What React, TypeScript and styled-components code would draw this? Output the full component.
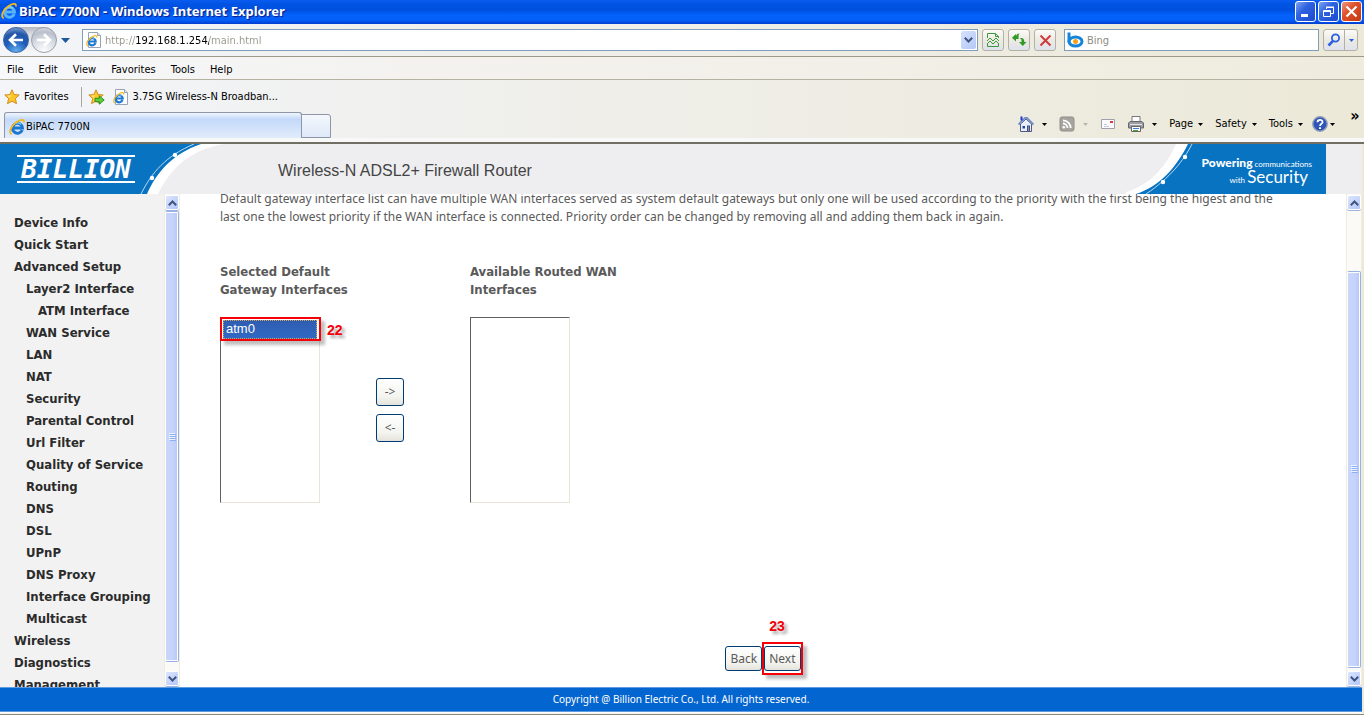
import React from "react";
import styled, { createGlobalStyle } from "styled-components";

const uiFont = `Tahoma, "DejaVu Sans Condensed", sans-serif`;
const arial = `Arial, "Liberation Sans", sans-serif`;

const GlobalStyle = createGlobalStyle`
  *, *::before, *::after { box-sizing: border-box; }
  body { margin: 0; background: #ece9d8; font: 11px/14px ${uiFont}; color: #000; }
  button, input, select { font: inherit; color: inherit; margin: 0; }
  button { padding: 0; border: 0; background: none; }
  input { outline: 0; }
  a { color: inherit; text-decoration: none; }
  svg { display: block; flex: none; }
`;

const Window = styled.div`
  display: flex;
  flex-direction: column;
  height: 100vh;
  min-height: 480px;
  overflow: hidden;
`;

/* ---------- title bar ---------- */
const TitleBar = styled.header`
  display: flex;
  align-items: center;
  gap: 2px;
  flex: none;
  height: 24px;
  padding: 0 2px 2px 1px;
  background: linear-gradient(#0a5cf0 0, #0054e3 4px, #0050e0 10px, #0362fb 15px, #0560fa 20px, #003dd0 24px);
`;
const Title = styled.h1`
  flex: 1;
  margin: 0;
  font: bold 13px/20px "Trebuchet MS", "Noto Sans", sans-serif;
  color: #fff;
  text-shadow: 1px 1px 1px #0a1883;
`;
const CaptionButton = styled.button<{ $close?: boolean }>`
  display: grid;
  place-items: center;
  width: 21px;
  height: 21px;
  border: 1px solid #fff;
  border-radius: 3px;
  background: ${(p) =>
    p.$close
      ? "linear-gradient(135deg, #ec9a80, #e0502a 40%, #c23a12)"
      : "linear-gradient(135deg, #7fa4f2, #2f62e0 40%, #1b4bd0)"};
`;

/* ---------- toolbars ---------- */
const barFill = "linear-gradient(90deg, #f3f5f9, #f0f0ee 30%, #ece9d8)";

const AddressBar = styled.div`
  display: flex;
  align-items: center;
  gap: 4px;
  flex: none;
  height: 33px;
  padding: 0 6px 0 3px;
  background: ${barFill};
  border-bottom: 1px solid #9d9a8a;
`;
const NavButtons = styled.div`
  display: flex;
  align-items: center;
  gap: 2px;
  height: 27px;
  border-radius: 14px;
  background: linear-gradient(#b4b8bf, #dfe2e6 30%, #f6f7f9);
`;
const RoundButton = styled.button<{ $active?: boolean }>`
  display: grid;
  place-items: center;
  width: 26px;
  height: 26px;
  border-radius: 50%;
  border: 1px solid ${(p) => (p.$active ? "#3c62a4" : "#9ba1ab")};
  background: ${(p) =>
    p.$active
      ? "radial-gradient(circle at 50% 100%, #69b4f2, #1c5cb8 45%, #2458a8 70%, #9fbbe2)"
      : "radial-gradient(circle at 50% 100%, #ffffff, #d6dbe3 50%, #b9c0cc 75%, #e8ebf0)"};
`;
const BareButton = styled.button`
  display: grid;
  place-items: center;
  width: 12px;
  height: 20px;
  margin: 0 7px 0 -2px;
`;
const Field = styled.div`
  display: flex;
  align-items: center;
  gap: 3px;
  height: 22px;
  padding: 0 1px 0 3px;
  border: 1px solid #7f9db9;
  background: #fff;
`;
const AddressField = styled(Field)`
  flex: 1;
`;
const SearchField = styled(Field)`
  width: 255px;
  margin-left: 4px;
  padding-left: 2px;
`;
const TextInput = styled.input`
  flex: 1;
  min-width: 0;
  height: 18px;
  padding: 0;
  border: 0;
  background: transparent;
  color: #8d8b80;
  &::placeholder { color: #8d8b80; }
`;
const UrlInput = styled(TextInput)`
  color: transparent;
  background: linear-gradient(90deg, #98968a 31px, #000 31px, #000 104px, #98968a 104px);
  background-clip: text;
`;
const DropButton = styled.button`
  display: grid;
  place-items: center;
  width: 15px;
  height: 18px;
  border-radius: 2px;
  background: linear-gradient(135deg, #d5e1fc, #b4c8f6);
`;
const ToolButton = styled.button`
  display: grid;
  place-items: center;
  width: 22px;
  height: 22px;
  border: 1px solid #b3b1a6;
  border-radius: 3px;
  background: linear-gradient(#fbfbf9, #eceae2 50%, #dfe2ee);
`;
const SplitButton = styled.div`
  display: flex;
  width: 35px;
  height: 22px;
  border: 1px solid #b3b1a6;
  border-radius: 3px;
  background: linear-gradient(#fbfbf9, #eceae2 50%, #dfe2ee);
  button { display: grid; place-items: center; flex: 1; }
  button + button { flex: 0 0 13px; border-left: 1px solid #b3b1a6; }
`;

const MenuBar = styled.nav`
  display: flex;
  align-items: center;
  gap: 15px;
  flex: none;
  height: 23px;
  padding: 4px 7px 0;
  background: linear-gradient(90deg, #f7f8fb, #f3f2ef 30%, #efecde);
  border-bottom: 1px solid #b5b2a2;
`;
const FavoritesBar = styled.div`
  display: flex;
  align-items: center;
  gap: 8px;
  flex: none;
  height: 32px;
  padding: 2px 4px 0;
  background: ${barFill};
`;
const FavButton = styled.button`
  display: flex;
  align-items: center;
  gap: 4px;
  height: 20px;
`;
const FavDivider = styled.span`
  width: 1px;
  height: 20px;
  margin: 0 -2px 0 4px;
  background: #aaa89a;
`;

const TabRow = styled.div`
  display: flex;
  align-items: flex-end;
  flex: none;
  height: 32px;
  padding: 0 0 4px 4px;
  background: linear-gradient(#f8f8f8, #f8f8f8) bottom / 100% 4px no-repeat, ${barFill};
  border-bottom: 2px solid #716f64;
`;
const Tab = styled.button`
  display: flex;
  align-items: center;
  gap: 1px;
  align-self: stretch;
  width: 298px;
  padding: 2px 4px 0;
  border: 1px solid #8d97a8;
  border-bottom: 0;
  border-radius: 3px 3px 0 0;
  background: linear-gradient(#f0f5fd, #c3d9f9 25%, #e2ecfb);
`;
const NewTab = styled.button`
  width: 30px;
  height: 24px;
  margin-left: -1px;
  border: 1px solid #8d97a8;
  border-radius: 0 3px 0 0;
  background: linear-gradient(#f4f7fc, #dfe9f8);
`;
const CommandBar = styled.div`
  display: flex;
  align-items: center;
  gap: 12px;
  margin-left: auto;
  height: 28px;
  padding-right: 14px;
`;
const Command = styled.button<{ $gap?: number }>`
  display: flex;
  align-items: center;
  gap: ${(p) => p.$gap ?? 5}px;
`;
const HelpGroup = styled.div`
  display: flex;
  gap: 15px;
  margin-left: -3px;
`;
const Chevrons = styled.button`
  align-self: flex-start;
  width: 10px;
  margin: -7px -10px 0 0;
  font: bold 16px/14px ${uiFont};
`;

/* ---------- page ---------- */
const Page = styled.div`
  display: flex;
  flex-direction: column;
  flex: 1;
  min-height: 0;
  margin-right: 2px;
  border-bottom: 1px solid #fff;
  background: #fff;
`;
const Banner = styled.div`
  display: flex;
  align-items: center;
  flex: none;
  height: 50px;
  padding-right: 36px;
  background: #eeeef0;
`;
const Logo = styled.a`
  display: flex;
  align-items: center;
  width: 220px;
  height: 50px;
  position: relative;
`;
const Art = styled.svg`
  position: absolute;
  top: 0;
  left: 0;
`;
const LogoName = styled.span`
  position: relative;
  width: 118px;
  height: 28px;
  margin-left: 17px;
  border: 2px solid #fff;
  border-width: 2px 0;
  text-align: center;
  font: italic bold 26px/24px "DejaVu Sans Mono", monospace;
  color: #fff;
`;
const ProductName = styled.h2`
  flex: 1;
  margin: 4px 0 0 58px;
  font: 16px/20px ${arial};
  color: #444;
`;
const Slogan = styled.div`
  position: relative;
  width: 200px;
  height: 50px;
  padding: 12px 14px 0 0;
  color: #fff;
  text-align: right;
  font: 8px/13px Lato, sans-serif;
`;
const SloganLine = styled.div<{ $shift?: boolean }>`
  position: relative;
  padding-right: ${(p) => (p.$shift ? 4 : 0)}px;
  white-space: nowrap;
`;
const Strong = styled.b`
  font-size: 12px;
  font-weight: 900;
`;
const Large = styled.span`
  font-size: 17px;
  line-height: 12px;
`;

const Body = styled.div`
  display: flex;
  flex: 1;
  min-height: 0;
`;
const Sidebar = styled.nav`
  flex: none;
  width: 164px;
  overflow: hidden;
  background: #f2f2f2;
  ul { list-style: none; margin: 0; padding: 18px 0 0 14px; }
`;
const NavItem = styled.li<{ $level: number }>`
  padding-left: ${(p) => p.$level * 12}px;
  font: bold 13px/22px ${uiFont};
  color: #2b2b2b;
  white-space: nowrap;
`;

const ScrollColumn = styled.div`
  display: flex;
  flex-direction: column;
  flex: none;
  width: 16px;
  padding: 1px 0;
  gap: 1px;
  border: 1px solid #eeeddf;
  border-width: 0 1px;
  background: #fbfaf6;
`;
const ScrollButton = styled.button`
  display: grid;
  place-items: center;
  height: 15px;
  border: 1px solid #fff;
  border-radius: 2px;
  background: linear-gradient(135deg, #dbe5fd, #b3c7f7);
  box-shadow: 0 1px 0 #9db4e2;
`;
const Track = styled.div`
  display: flex;
  flex-direction: column;
  flex: 1;
`;
const Thumb = styled.div<{ $grow: number }>`
  display: grid;
  place-items: center;
  flex: ${(p) => p.$grow} 0 0;
  border: 1px solid #98b0e4;
  border-left-color: #fff;
  border-radius: 2px;
  background: linear-gradient(90deg, #c9d6fb, #c5d3fc 60%, #b3c6f3);
  box-shadow: inset 0 1px #fff, inset 0 -1px #fff, inset -1px 0 #fff;
`;
const Space = styled.div<{ $grow: number }>`
  flex: ${(p) => p.$grow} 0 0;
`;

const Main = styled.main`
  flex: 1;
  min-width: 0;
  overflow: hidden;
  padding: 0 40px;
  font: 12px/18px Tahoma, "Noto Sans", sans-serif;
  color: #5a5a5a;
`;
const Intro = styled.p`
  margin: -4px 16px 37px 0;
`;
const Picker = styled.div`
  display: grid;
  grid-template-columns: 156px 94px 160px;
  row-gap: 18px;
`;
const PickerLabel = styled.label<{ $column: number }>`
  grid-row: 1;
  grid-column: ${(p) => p.$column};
  font: bold 13px/18px ${uiFont};
`;
const ListWrap = styled.div<{ $column: number }>`
  grid-row: 2;
  grid-column: ${(p) => p.$column};
  position: relative;
`;
const ListBox = styled.select`
  appearance: none;
  display: block;
  width: 100px;
  height: 186px;
  padding: 2px;
  overflow: hidden;
  border: 1px solid #e8e5d8;
  border-top-color: #5f5f5f;
  border-left-color: #5f5f5f;
  border-radius: 0;
  outline: 0;
  background: #fff;
  font: 13px/18px ${arial};
  option { min-height: 19px; padding: 1px 3px 0; }
  option:checked {
    background: linear-gradient(#2f5cb0, #316ac5);
    outline: 1px dotted #d8a95a;
    outline-offset: -1px;
    color: #fff;
    -webkit-text-fill-color: #fff;
  }
`;
const MoveButtons = styled.div`
  grid-row: 2;
  grid-column: 2;
  align-self: center;
  display: grid;
  gap: 8px;
`;
const FormButton = styled.button`
  height: 25px;
  padding: 0 4px;
  border: 1px solid #003c74;
  border-radius: 3px;
  background: linear-gradient(#fff, #f3f3ef 70%, #e4e2da);
  color: #5a5a5a;
`;
const MoveButton = styled(FormButton)`
  width: 28px;
  height: 28px;
  padding: 0;
`;
const Actions = styled.div`
  display: flex;
  justify-content: center;
  gap: 2px;
  margin-top: 143px;
`;
const Marked = styled.div`
  position: relative;
  display: flex;
`;
const Mark = styled.span<{ $inset: string }>`
  position: absolute;
  inset: ${(p) => p.$inset};
  border: 2px solid #f50008;
  box-shadow: 4px 4px 3px rgba(0, 0, 0, 0.25);
  pointer-events: none;
`;
const Step = styled.b<{ $left: number; $top: number }>`
  position: absolute;
  left: ${(p) => p.$left}px;
  top: ${(p) => p.$top}px;
  font: bold 14px/16px ${arial};
  color: #f50008;
  text-shadow: 3px 3px 3px rgba(0, 0, 0, 0.35);
`;

const Footer = styled.footer`
  flex: none;
  height: 25px;
  border: 1px solid #5f9be0;
  border-width: 1px 0;
  background: #0365cf;
  color: #fff;
  text-align: center;
  font: 10px/23px "Noto Sans", ${arial};
`;
const StatusEdge = styled.div`
  flex: none;
  height: 2px;
  border-bottom: 1px solid #8d8a7c;
  background: #f4f3ee;
`;

/* ---------- icons ---------- */
const IeMark = ({ color = "#1b78d2" }: { color?: string }) => (
  <>
    <path d="M13.200 11A5 5 0 1 1 13.500 9H5" fill="none" stroke={color} strokeWidth="3" />
    <path d="M4.200 6A5.200 5.200 0 0 1 12 5.200" fill="none" stroke="#8fd2fb" strokeWidth="1.200" />
    <path d="M2.800 15.200C-1.200 13.600 2.400 6.600 7.600 3C12 0 15.800 0 14.800 3.600" fill="none" stroke="#f3b91d" strokeWidth="1.700" />
  </>
);
const IeIcon = ({ color }: { color?: string }) => (
  <svg width="16" height="16" viewBox="0 0 16 16"><IeMark color={color} /></svg>
);
const PageIcon = () => (
  <svg width="16" height="16" viewBox="0 0 16 16">
    <path d="M2.500.500h9l3 3v12h-12z" fill="#fff" stroke="#9aa3b5" />
    <path d="M11.500.500v3h3" fill="#dfe5f0" stroke="#9aa3b5" />
    <g transform="translate(0 3) scale(.72)"><IeMark /></g>
  </svg>
);
const Arrow = ({ color = "#000", size = 5 }: { color?: string; size?: number }) => (
  <svg width={size} height={Math.ceil(size / 2)} viewBox="0 0 10 6" preserveAspectRatio="none">
    <path d="M0 0h10L5 6z" fill={color} />
  </svg>
);
const Chevron = ({ up }: { up?: boolean }) => (
  <svg width="9" height="6" viewBox="0 0 9 6" fill="none" stroke="#3f5580" strokeWidth="2">
    <path d={up ? "M.8 5.2 4.5 1.5 8.2 5.2" : "M.8.8 4.5 4.5 8.2.8"} />
  </svg>
);
const NavArrow = ({ back }: { back?: boolean }) => (
  <svg width="16" height="14" viewBox="0 0 16 14" fill="none" stroke="#fff" strokeWidth="2.6">
    <path d={back ? "M8 1.2 2 7l6 5.8M2.4 7H15" : "M8 1.2 14 7l-6 5.8M13.6 7H1"} />
  </svg>
);
const starPath = "M8 .8l2.1 4.7 5.1.5-3.8 3.5 1.1 5.2L8 12.2l-4.5 2.5 1.1-5.2L.8 6l5.1-.5z";
const Star = ({ add }: { add?: boolean }) => (
  <svg width={add ? 17 : 16} height="16" viewBox={add ? "0 0 17 16" : "0 0 16 16"}>
    <path d={starPath} fill="#ffc629" stroke="#c8861a" strokeWidth=".9" />
    <path d="M8 2.8 6.6 6.2l-3.4.5 2.6 2z" fill="#ffe79a" />
    {add && <path d="M7 9.3h4.2V6.8l5 4.2-5 4.2v-2.5H7z" fill="#5fce3c" stroke="#1f8a1c" strokeWidth=".9" />}
  </svg>
);
const Grip = () => (
  <svg width="7" height="8" viewBox="0 0 7 8">
    <path d="M0 .5h6M0 2.5h6M0 4.5h6M0 6.5h6" stroke="#eef4fe" />
    <path d="M1 1.5h6M1 3.5h6M1 5.5h6M1 7.5h6" stroke="#8cb0f8" />
  </svg>
);

/* ---------- data ---------- */
const navItems: [string, number][] = [
  ["Device Info", 0],
  ["Quick Start", 0],
  ["Advanced Setup", 0],
  ["Layer2 Interface", 1],
  ["ATM Interface", 2],
  ["WAN Service", 1],
  ["LAN", 1],
  ["NAT", 1],
  ["Security", 1],
  ["Parental Control", 1],
  ["Url Filter", 1],
  ["Quality of Service", 1],
  ["Routing", 1],
  ["DNS", 1],
  ["DSL", 1],
  ["UPnP", 1],
  ["DNS Proxy", 1],
  ["Interface Grouping", 1],
  ["Multicast", 1],
  ["Wireless", 0],
  ["Diagnostics", 0],
  ["Management", 0],
];

const ScrollBar = ({ before, thumb, after }: { before: number; thumb: number; after: number }) => (
  <ScrollColumn>
    <ScrollButton aria-label="Scroll up"><Chevron up /></ScrollButton>
    <Track>
      <Space $grow={before} />
      <Thumb $grow={thumb}><Grip /></Thumb>
      <Space $grow={after} />
    </Track>
    <ScrollButton aria-label="Scroll down"><Chevron /></ScrollButton>
  </ScrollColumn>
);

export default function App() {
  return (
    <Window>
      <GlobalStyle />
      <TitleBar>
        <IeIcon color="#58b4f5" />
        <Title>BiPAC 7700N - Windows Internet Explorer</Title>
        <CaptionButton aria-label="Minimize">
          <svg width="13" height="13"><path d="M2 9h7v3H2z" fill="#fff" /></svg>
        </CaptionButton>
        <CaptionButton aria-label="Restore">
          <svg width="13" height="13" fill="none" stroke="#fff">
            <path d="M4.5 4V2.5h7v6H9M4 2h8" />
            <path d="M1.5 5.5h7v6h-7zM1 6.500h8" />
          </svg>
        </CaptionButton>
        <CaptionButton $close aria-label="Close">
          <svg width="13" height="13" stroke="#fff" strokeWidth="2.2"><path d="M1.500 1.500l10 10M11.500 1.500l-10 10" /></svg>
        </CaptionButton>
      </TitleBar>

      <AddressBar>
        <NavButtons>
          <RoundButton $active aria-label="Back"><NavArrow back /></RoundButton>
          <RoundButton aria-label="Forward"><NavArrow /></RoundButton>
        </NavButtons>
        <BareButton aria-label="Recent pages"><Arrow color="#1c5a96" size={9} /></BareButton>
        <AddressField>
          <PageIcon />
          <UrlInput aria-label="Address" defaultValue="http://192.168.1.254/main.html" />
          <DropButton aria-label="Show address list"><Chevron /></DropButton>
        </AddressField>
        <ToolButton aria-label="Compatibility view">
          <svg width="14" height="16" fill="none" stroke="#3d9a3a">
            <path d="M1.500 6V1.500h8l3 3V6M9.500 1.500v3h3M1.500 11v3.500h11V11" />
            <path d="M1 9l3-3 3 3 3-3 3 3M1 12l3-3 3 3 3-3 3 3" />
          </svg>
        </ToolButton>
        <ToolButton aria-label="Refresh">
          <svg width="16" height="16" fill="#2f9a26">
            <path d="M5 2v2.500h2.500v2.500H5v2.500L1 5.800z" />
            <path d="M5 5C5 3 6 1.500 8.500 1.500 7.500 2.500 7.500 4 7.500 5z" />
            <path d="M15.500 10 11.800 14 8 10h2.500V8C10.500 7 9.500 6.500 8.500 6.500c3-1.200 4.800.3 4.800 3.500z" />
          </svg>
        </ToolButton>
        <ToolButton aria-label="Stop">
          <svg width="13" height="13" stroke="#cf3a3f" strokeWidth="2"><path d="M1.500 1.500l10 10M11.500 1.500l-10 10" /></svg>
        </ToolButton>
        <SearchField>
          <svg width="17" height="16" fill="none">
            <path d="M2 .5v10" stroke="#1585d8" strokeWidth="3" />
            <ellipse cx="8.500" cy="9.500" rx="6.500" ry="4.500" stroke="#1585d8" strokeWidth="3" />
            <circle cx="8.500" cy="9.500" r="2.500" fill="#f7a21b" />
          </svg>
          <TextInput aria-label="Search" placeholder="Bing" />
        </SearchField>
        <SplitButton>
          <button aria-label="Search">
            <svg width="14" height="14" fill="none" stroke="#2a5fe0">
              <circle cx="8.500" cy="5" r="3.600" strokeWidth="1.800" />
              <path d="M6 7.800 1.500 12.500" strokeWidth="2.600" />
            </svg>
          </button>
          <button aria-label="Search options"><Arrow color="#2a5fe0" /></button>
        </SplitButton>
      </AddressBar>

      <MenuBar>
        {["File", "Edit", "View", "Favorites", "Tools", "Help"].map((m) => (
          <button key={m}>{m}</button>
        ))}
      </MenuBar>

      <FavoritesBar>
        <FavButton><Star />Favorites</FavButton>
        <FavDivider />
        <FavButton aria-label="Add to Favorites Bar"><Star add /></FavButton>
        <FavButton><PageIcon />3.75G Wireless-N Broadban...</FavButton>
      </FavoritesBar>

      <TabRow>
        <Tab><IeIcon />BiPAC 7700N</Tab>
        <NewTab aria-label="New tab" />
        <CommandBar>
          <Command $gap={8} aria-label="Home">
            <svg width="16" height="16">
              <path d="M2.500 8v7.500h11V8L8 3z" fill="#e9eef8" stroke="#4c5c88" />
              <path d="M.5 8.500 7 1.800h2l6.500 6.700" fill="none" stroke="#6f8cc8" strokeWidth="1.800" />
              <path d="M3.500.500v4" stroke="#2436c8" strokeWidth="2" />
              <path d="M4.500 10H7v2.500H4.500z" fill="#24449c" />
              <path d="M9 9.500h3V15H9z" fill="#2b50b0" />
              <path d="M10 10.500h1V15h-1z" fill="#c8884a" />
            </svg>
            <Arrow />
          </Command>
          <Command $gap={8} aria-label="Feeds">
            <svg width="16" height="16" fill="none" stroke="#fff" strokeWidth="1.800">
              <rect x="1" y="1" width="14" height="14" rx="2" fill="#a5a49e" stroke="#8f8e88" strokeWidth="1" />
              <path d="M4 7.500A4.500 4.500 0 0 1 8.500 12M4 4.300A7.700 7.700 0 0 1 11.700 12" />
              <circle cx="4.800" cy="11.200" r="1.300" fill="#fff" stroke="none" />
            </svg>
            <Arrow color="#b9b7aa" />
          </Command>
          <Command aria-label="Read mail">
            <svg width="16" height="16" fill="none">
              <path d="M1.500 3.500h13v9h-13z" fill="#fafaff" stroke="#a09fb0" />
              <path d="M4 10.500h5M4 8.500h3" stroke="#c5c8d8" />
              <path d="M10 5h3v2h-3z" fill="#dc3b3b" />
            </svg>
          </Command>
          <Command $gap={8} aria-label="Print">
            <svg width="16" height="16">
              <path d="M4 .5h8V6H4z" fill="#fff" stroke="#777" />
              <path d="M.5 7 2 5.500h12L15.500 7v5h-15z" fill="#9a9ca1" stroke="#66686d" />
              <path d="M2 8.500h12" stroke="#e4e4e4" />
              <path d="M3.500 10.500h9v5h-9z" fill="#fff" stroke="#666" />
              <path d="M5 12.500h6" stroke="#3b7be0" />
              <path d="M5 14.500h5" stroke="#4ba04b" />
            </svg>
            <Arrow />
          </Command>
          <Command>Page<Arrow /></Command>
          <Command>Safety<Arrow /></Command>
          <Command>Tools<Arrow /></Command>
          <HelpGroup>
            <Command $gap={2} aria-label="Help">
              <svg width="16" height="16" fill="none">
                <circle cx="8" cy="8" r="7.200" fill="#2f55b8" stroke="#8f9ab5" strokeWidth="1.400" />
                <path d="M5.500 6.200C5.500 3 10.700 3 10.500 6.200 10.400 7.800 8 7.800 8 10" stroke="#fff" strokeWidth="1.800" />
                <path d="M7 11.200h2v1.900H7z" fill="#fff" />
              </svg>
              <Arrow />
            </Command>
            <Chevrons aria-label="More commands">»</Chevrons>
          </HelpGroup>
        </CommandBar>
      </TabRow>

      <Page>
        <Banner>
          <Logo href="#" aria-label="Billion">
            <Art width="230" height="50" fill="none">
              <path d="M0 0h224C188 6 170 26 158 50H0z" fill="#fff" />
              <path d="M0 0h201C172 10 157 28 147 50H0z" fill="#0873c1" />
              <path d="M194 0C166 12 152 28 141 50" stroke="#b9dcf5" />
              <circle cx="175" cy="11" r="2.200" fill="#fff" />
              <circle cx="152" cy="34" r="2.200" fill="#fff" />
            </Art>
            <LogoName>BILLION</LogoName>
          </Logo>
          <ProductName>Wireless-N ADSL2+ Firewall Router</ProductName>
          <Slogan>
            <Art width="200" height="50" fill="none">
              <path d="M50 0h30v50H-8C24 44 40 22 50 0z" fill="#fff" />
              <path d="M62 0h138v50H10C34 42 50 24 62 0z" fill="#0873c1" />
              <path d="M66 0C58 16 44 34 20 50" stroke="#b9dcf5" />
              <circle cx="59" cy="13" r="2.200" fill="#fff" />
              <circle cx="37" cy="38" r="2.200" fill="#fff" />
            </Art>
            <SloganLine><Strong>Powering</Strong> communications</SloganLine>
            <SloganLine $shift>with <Large>Security</Large></SloganLine>
          </Slogan>
        </Banner>

        <Body>
          <Sidebar>
            <ul>
              {navItems.map(([label, level]) => (
                <NavItem key={label} $level={level}><a href="#">{label}</a></NavItem>
              ))}
            </ul>
          </Sidebar>
          <ScrollBar before={0} thumb={450} after={8} />

          <Main>
            <Intro>
              Default gateway interface list can have multiple WAN interfaces served as system default
              gateways but only one will be used according to the priority with the first being the higest
              and the last one the lowest priority if the WAN interface is connected. Priority order can be
              changed by removing all and adding them back in again.
            </Intro>
            <Picker>
              <PickerLabel htmlFor="selected" $column={1}>Selected Default Gateway Interfaces</PickerLabel>
              <ListWrap $column={1}>
                <ListBox id="selected" multiple size={9} defaultValue={["atm0"]}>
                  <option value="atm0">atm0</option>
                </ListBox>
                <Mark $inset="0 55px 162px 0" />
                <Step $left={107} $top={5}>22</Step>
              </ListWrap>
              <MoveButtons>
                <MoveButton>-&gt;</MoveButton>
                <MoveButton>&lt;-</MoveButton>
              </MoveButtons>
              <PickerLabel htmlFor="available" $column={3}>Available Routed WAN Interfaces</PickerLabel>
              <ListWrap $column={3}>
                <ListBox id="available" multiple size={9} />
              </ListWrap>
            </Picker>
            <Actions>
              <FormButton>Back</FormButton>
              <Marked>
                <FormButton>Next</FormButton>
                <Mark $inset="-4px -2px" />
                <Step $left={5} $top={-28}>23</Step>
              </Marked>
            </Actions>
          </Main>
          <ScrollBar before={60} thumb={396} after={2} />
        </Body>
        <Footer>Copyright @ Billion Electric Co., Ltd. All rights reserved.</Footer>
      </Page>
      <StatusEdge />
    </Window>
  );
}
